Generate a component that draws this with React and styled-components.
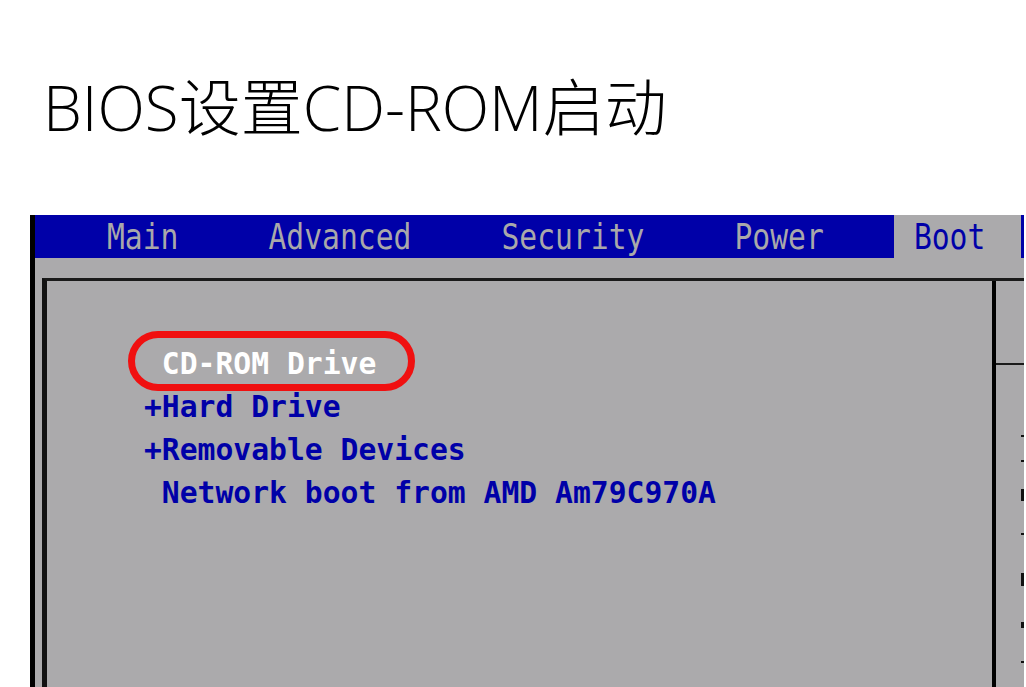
import React from "react";
import styled, {createGlobalStyle, css} from 'styled-components';

const biosGray = "#abaaac";
const biosBlue = "#0000a8";
const biosFont = css`
	font-family:"DejaVu Sans Mono", "Liberation Mono", monospace;
	font-size:29.7px;
`;

const GlobalStyle = createGlobalStyle`
	html, body{
		margin:0;
		padding:0;
		background:#fff;
		overflow:hidden;
	}
`;

const Page = styled.div`
	width:1026px;
	height:687px;
	padding-top:67px;
	box-sizing:border-box;
	overflow:hidden;
`;

const Title = styled.h1`
	margin:0 0 0 43px;
	font-family:"Open Sans", "Noto Sans CJK SC", sans-serif;
	font-weight:300;
	font-size:62px;
	line-height:80px;
	color:#000;
`;

const Screen = styled.section`
	margin:68px 0 0 30px;
	width:994px;
	height:472px;
	border-left:5px solid #000;
	background-color:${biosGray};
	box-sizing:border-box;
	display:flex;
	flex-direction:column;
`;

const TabBar = styled.nav`
	display:flex;
	gap:50px;
	height:43px;
	padding-left:52px;
	background-color:${biosBlue};
`;

const Tab = styled.div`
	display:flex;
	align-items:center;
	padding:0 ${p => p.$active ? "36px" : "20px"} 0 20px;
	background-color:${p => p.$active ? biosGray : "transparent"};
	color:${p => p.$active ? biosBlue : "#a9a8aa"};
`;

const TabLabel = styled.span`
	${biosFont}
	display:inline-block;
	line-height:43px;
	transform:scaleY(1.2);
`;

const Body = styled.div`
	flex:1;
	display:flex;
	padding:20px 0 0 7px;
`;

const Panel = styled.div`
	flex:1;
	display:flex;
	border-top:3px solid #1a1a1a;
	border-left:5px solid #111;
`;

const MainPane = styled.div`
	width:945px;
`;

const BootList = styled.ul`
	list-style:none;
	margin:0;
	padding:61px 0 0 97px;
`;

const BootItem = styled.li`
	${biosFont}
	position:relative;
	font-weight:bold;
	line-height:43px;
	height:43px;
	white-space:pre;
	color:${p => p.$selected ? "#fff" : biosBlue};
`;

// red annotation ring drawn over the selected entry
const Highlight = styled.span`
	position:absolute;
	left:-16px;
	top:-11px;
	width:287px;
	height:60px;
	box-sizing:border-box;
	border:7px solid #f01010;
	border-radius:30px;
`;

const SidePane = styled.aside`
	flex:1;
	border-left:4px solid #000;
	display:flex;
	flex-direction:column;
`;

const SideHeader = styled.div`
	height:82px;
	border-bottom:2px solid #1a1a1a;
`;

const SideMarks = styled.div`
	display:flex;
	flex-direction:column;
	align-items:flex-start;
	padding-left:25px;
`;

const Mark = styled.span`
	display:block;
	width:3px;
	height:${p => p.$h}px;
	margin-top:${p => p.$gap}px;
	background-color:#111;
`;

const tabs = ["Main", "Advanced", "Security", "Power", "Boot"];

const items = [
	{label:" CD-ROM Drive", selected:true},
	{label:"+Hard Drive"},
	{label:"+Removable Devices"},
	{label:" Network boot from AMD Am79C970A"},
];

const marks = [
	{gap:70, h:2},
	{gap:23, h:2},
	{gap:27, h:12},
	{gap:32, h:2},
	{gap:38, h:13},
	{gap:36, h:6},
	{gap:33, h:2},
];

const App = ()=>{
	return (
	<Page>
		<GlobalStyle/>
		<Title>BIOS设置CD-ROM启动</Title>
		<Screen>
			<TabBar>
				{tabs.map(t => (
					<Tab key={t} $active={t === "Boot"}>
						<TabLabel>{t}</TabLabel>
					</Tab>
				))}
			</TabBar>
			<Body>
				<Panel>
					<MainPane>
						<BootList>
							{items.map(item => (
								<BootItem key={item.label} $selected={item.selected}>
									{item.selected && <Highlight/>}
									{item.label}
								</BootItem>
							))}
						</BootList>
					</MainPane>
					<SidePane>
						<SideHeader/>
						<SideMarks>
							{marks.map((m, i) => <Mark key={i} $gap={m.gap} $h={m.h}/>)}
						</SideMarks>
					</SidePane>
				</Panel>
			</Body>
		</Screen>
	</Page>
	);
}

export default App;
